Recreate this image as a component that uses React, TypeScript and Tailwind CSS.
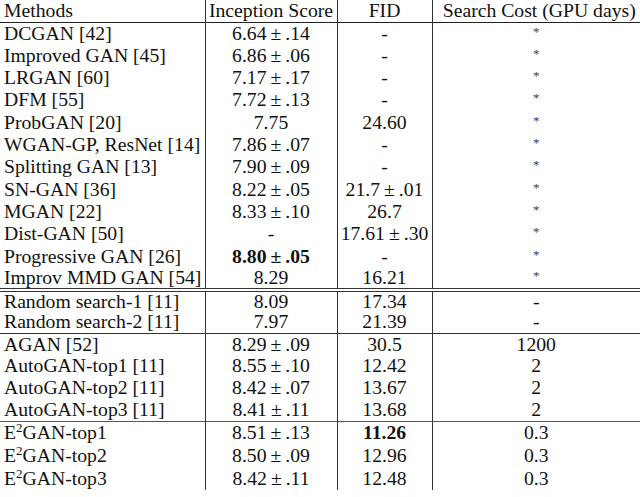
type Row = { m: React.ReactNode; is: React.ReactNode; fid: React.ReactNode; cost: string };

const pm = (a: string, b: string) => (
  <>
    {a}
    <span className="mx-[4px]">±</span>
    {b}
  </>
);

const e2 = (s: string) => (
  <>
    E<sup className="text-[13px] relative top-[-7px]">2</sup>
    {s}
  </>
);

const groups: { h: string; rows: Row[]; line: string }[] = [
  {
    h: "h-[22.33px]",
    line: "border-b-4 border-double border-[#333]",
    rows: [
      { m: "DCGAN [42]", is: pm("6.64", ".14"), fid: "-", cost: "*" },
      { m: "Improved GAN [45]", is: pm("6.86", ".06"), fid: "-", cost: "*" },
      { m: "LRGAN [60]", is: pm("7.17", ".17"), fid: "-", cost: "*" },
      { m: "DFM [55]", is: pm("7.72", ".13"), fid: "-", cost: "*" },
      { m: "ProbGAN [20]", is: "7.75", fid: "24.60", cost: "*" },
      { m: "WGAN-GP, ResNet [14]", is: pm("7.86", ".07"), fid: "-", cost: "*" },
      { m: "Splitting GAN [13]", is: pm("7.90", ".09"), fid: "-", cost: "*" },
      { m: "SN-GAN [36]", is: pm("8.22", ".05"), fid: pm("21.7", ".01"), cost: "*" },
      { m: "MGAN [22]", is: pm("8.33", ".10"), fid: "26.7", cost: "*" },
      { m: "Dist-GAN [50]", is: "-", fid: pm("17.61", ".30"), cost: "*" },
      { m: "Progressive GAN [26]", is: <b>{pm("8.80", ".05")}</b>, fid: "-", cost: "*" },
      { m: "Improv MMD GAN [54]", is: "8.29", fid: "16.21", cost: "*" },
    ],
  },
  {
    h: "h-[21.5px]",
    line: "border-b border-[#333]",
    rows: [
      { m: "Random search-1 [11]", is: "8.09", fid: "17.34", cost: "-" },
      { m: "Random search-2 [11]", is: "7.97", fid: "21.39", cost: "-" },
    ],
  },
  {
    h: "h-[22px]",
    line: "border-b border-[#555]",
    rows: [
      { m: "AGAN [52]", is: pm("8.29", ".09"), fid: "30.5", cost: "1200" },
      { m: "AutoGAN-top1 [11]", is: pm("8.55", ".10"), fid: "12.42", cost: "2" },
      { m: "AutoGAN-top2 [11]", is: pm("8.42", ".07"), fid: "13.67", cost: "2" },
      { m: "AutoGAN-top3 [11]", is: pm("8.41", ".11"), fid: "13.68", cost: "2" },
    ],
  },
  {
    h: "h-[23px]",
    line: "",
    rows: [
      { m: e2("GAN-top1"), is: pm("8.51", ".13"), fid: <b>11.26</b>, cost: "0.3" },
      { m: e2("GAN-top2"), is: pm("8.50", ".09"), fid: "12.96", cost: "0.3" },
      { m: e2("GAN-top3"), is: pm("8.42", ".11"), fid: "12.48", cost: "0.3" },
    ],
  },
];

export default function App() {
  return (
    <div className="w-[640px] h-[497px] overflow-hidden bg-white text-[#111] font-['Liberation_Serif',serif] text-[19.7px]">
      <table className="w-[640px] table-fixed border-collapse">
        <colgroup>
          <col className="w-[205px]" />
          <col className="w-[132px]" />
          <col className="w-[95px]" />
          <col className="w-[208px]" />
        </colgroup>
        <tbody>
          <tr className="h-[22px] border-b border-[#222] leading-none">
            <td className="border-r border-[#333] pl-[4px] whitespace-nowrap">Methods</td>
            <td className="border-r border-[#333] text-center whitespace-nowrap">Inception Score</td>
            <td className="border-r border-[#333] text-center">FID</td>
            <td className="text-center whitespace-nowrap pl-[6px]">Search Cost (GPU days)</td>
          </tr>
          {groups.map((g, gi) =>
            g.rows.map((r, ri) => (
              <tr
                key={`${gi}-${ri}`}
                className={`${g.h} leading-none ${ri === g.rows.length - 1 ? g.line : ""}`}
              >
                <td className="border-r border-[#333] pl-[4px] whitespace-nowrap">{r.m}</td>
                <td className="border-r border-[#333] text-center whitespace-nowrap">{r.is}</td>
                <td className="border-r border-[#333] text-center whitespace-nowrap">{r.fid}</td>
                <td className="text-center">
                  {r.cost === "*" ? (
                    <span className="relative top-[-4px] text-[13px] text-[#444]">*</span>
                  ) : (
                    r.cost
                  )}
                </td>
              </tr>
            ))
          )}
        </tbody>
      </table>
    </div>
  );
}
